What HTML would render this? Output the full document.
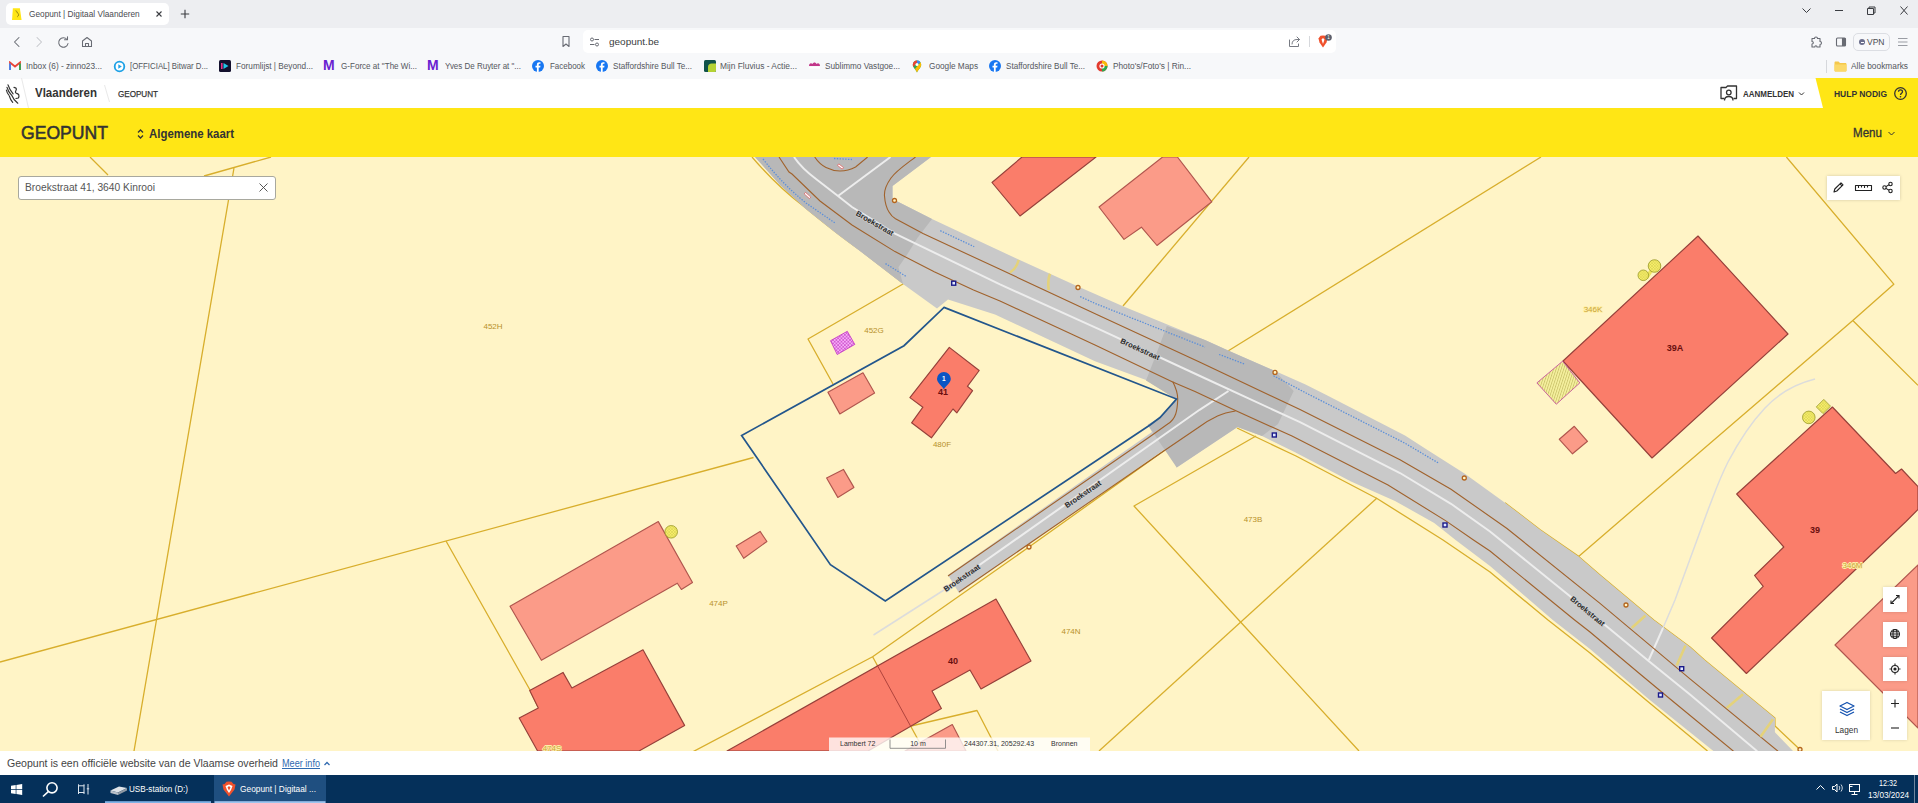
<!DOCTYPE html>
<html lang="nl">
<head>
<meta charset="utf-8">
<title>Geopunt | Digitaal Vlaanderen</title>
<style>
html,body{margin:0;padding:0;}
body{width:1918px;height:803px;overflow:hidden;position:relative;background:#fff;font-family:"Liberation Sans",sans-serif;color:#333;}
.abs{position:absolute;}
.t{position:absolute;white-space:nowrap;line-height:1;}
#tabstrip{left:0;top:0;width:1918px;height:28px;background:#edeef1;}
#tab{left:6px;top:3px;width:163px;height:22px;background:#fff;border-radius:5px;}
#toolbar{left:0;top:28px;width:1918px;height:26px;background:#f7f8fa;}
#urlbar{left:583px;top:30px;width:753px;height:23px;background:#fff;border-radius:5px;}
#bmbar{left:0;top:54px;width:1918px;height:25px;background:#f7f8fa;}
.bm{font-size:8.4px;color:#54575d;top:61.7px;}
#hdr{left:0;top:79px;width:1918px;height:30px;background:#fff;}
#yellow{left:0;top:108px;width:1918px;height:49.5px;background:#ffe615;}
#map{left:0;top:157px;width:1918px;height:594px;background:#fff4c6;overflow:hidden;}
#foot{left:0;top:751px;width:1918px;height:24px;background:#fff;}
#taskbar{left:0;top:775px;width:1918px;height:28px;background:#05305a;}
</style>
</head>
<body>
<!-- browser chrome -->
<div id="tabstrip" class="abs"></div>
<div id="tab" class="abs"></div>
<div id="toolbar" class="abs"></div>
<div id="urlbar" class="abs"></div>
<div id="bmbar" class="abs"></div>
<!-- tab -->
<svg class="abs" style="left:11.500px;top:7.500px" width="10.500" height="12.500" viewBox="0 0 12 14"><path d="M1 0H9L11 14H0Z" fill="#ffe615"/><path d="M4 3c1 0 2 1 2 2.500c1 0 1.500 1 1.500 2c0 1-.5 2-1.500 2.500" fill="none" stroke="#8a7a10" stroke-width="1"/></svg>
<div class="t fit" id="tabtitle" style="left:29px;top:9.700px;font-size:9px;color:#4a4c52;--w:110.7;transform:scaleX(0.9193);transform-origin:0 50%">Geopunt | Digitaal Vlaanderen</div>
<svg class="abs" style="left:155px;top:10px" width="8" height="8" viewBox="0 0 8 8"><path d="M1.500 1.500L6.500 6.500M6.500 1.500L1.500 6.500" stroke="#3a3c41" stroke-width="1.100" fill="none"/></svg>
<svg class="abs" style="left:180px;top:9px" width="10" height="10" viewBox="0 0 10 10"><path d="M5 .8V9.200M.8 5H9.200" stroke="#3a3c41" stroke-width="1.100" fill="none"/></svg>
<!-- window controls -->
<svg class="abs" style="left:1800px;top:5px" width="112" height="12" viewBox="0 0 112 12"><g fill="none" stroke="#3a3c41" stroke-width="1"><path d="M2.500 3.500L6.500 7.500L10.500 3.500"/><path d="M35 5.500H43"/><path d="M67.500 3.500h6v6h-6zM69 3.500V2h6v6h-1.500"/><path d="M100.500 1.500L107.500 9.500M107.500 1.500L100.500 9.500"/></g></svg>
<!-- toolbar icons -->
<svg class="abs" style="left:10px;top:34px" width="90" height="16" viewBox="0 0 90 16"><g fill="none" stroke-width="1.050" stroke-linecap="round" stroke-linejoin="round"><path d="M9 3.500L4.500 8L9 12.500" stroke="#686b73"/><path d="M27 3.500L31.500 8L27 12.500" stroke="#c4c6cb"/><path d="M57 5.500A4.700 4.700 0 1 0 58 9.500" stroke="#686b73"/><path d="M54.500 5.800H57.500V2.800" stroke="#686b73"/><path d="M72.500 12.500V7L77 3.500L81.500 7V12.500Z" stroke="#686b73"/><path d="M75.500 12.500V9.500H78.500V12.500" stroke="#686b73"/></g></svg>
<svg class="abs" style="left:561px;top:35px" width="10" height="13" viewBox="0 0 10 13"><path d="M2 1.500H8V11.500L5 9L2 11.500Z" fill="none" stroke="#686b73" stroke-width="1.100" stroke-linejoin="round"/></svg>
<svg class="abs" style="left:589px;top:37px" width="11" height="10" viewBox="0 0 11 10"><g fill="none" stroke="#686b73" stroke-width="1"><circle cx="3" cy="2.500" r="1.500"/><path d="M5.500 2.500H10"/><circle cx="8" cy="7.500" r="1.500"/><path d="M1 7.500H5.500"/></g></svg>
<div class="t fit" id="url" style="left:609px;top:36.500px;font-size:9.5px;color:#3a3c41;--w:50;transform:scaleX(1.0516);transform-origin:0 50%">geopunt.be</div>
<svg class="abs" style="left:1288px;top:35px" width="13" height="13" viewBox="0 0 13 13"><g fill="none" stroke="#777a82" stroke-width="1" stroke-linejoin="round" stroke-linecap="round"><path d="M1.500 5V11.500H10.500V9"/><path d="M4 9C4 6 6 4.500 9 4.500H11.500M9 2L11.500 4.500L9 7"/></g></svg>
<div class="abs" style="left:1309px;top:36px;width:1px;height:11px;background:#d6d8dc"></div>
<svg class="abs" style="left:1316px;top:33px" width="20" height="16" viewBox="0 0 20 16"><path d="M7 2.500L4.500 2.800L2.500 5.500L3.500 9.500L7 14.500L10.500 9.500L11.500 5.500L9.500 2.800Z" fill="#f0512c"/><path d="M7 5L5.500 6.500L7 11L8.500 6.500Z" fill="#fff"/><circle cx="12.500" cy="4.500" r="3.300" fill="#5c5f6b"/><text x="12.500" y="6.200" font-family="'Liberation Sans',sans-serif" font-size="4.500" fill="#fff" text-anchor="middle">1</text></svg>
<svg class="abs" style="left:1808px;top:35px" width="42" height="14" viewBox="0 0 42 14"><g fill="none" stroke="#686b73" stroke-width="1.100" stroke-linejoin="round"><path d="M4 3.500H6.500C6.500 1.500 9.500 1.500 9.500 3.500H12V6.500C14 6.500 14 9.500 12 9.500V12H9C9 10.300 6.800 10.300 6.800 12H4V9C5.800 9 5.800 6.500 4 6.500Z"/><rect x="28.500" y="3" width="9" height="8" rx="1"/><path d="M34.500 3V11" /></g><rect x="34.500" y="3" width="3" height="8" fill="#686b73"/></svg>
<div class="abs" style="left:1853px;top:32.500px;width:37px;height:18px;border:1px solid #dcdee3;border-radius:5px;background:#f7f8fa;box-sizing:border-box"></div>
<div class="abs" style="left:1859px;top:39px;width:6px;height:6px;border-radius:3px;background:#6a6d8c"></div><div class="abs" style="left:1860.500px;top:41.500px;width:3px;height:1px;background:#fff"></div>
<div class="t" style="left:1867px;top:37.500px;font-size:8.500px;color:#4a4c52">VPN</div>
<svg class="abs" style="left:1897px;top:37px" width="12" height="10" viewBox="0 0 12 10"><path d="M1 1.500H10.500M1 5H10.500M1 8.500H10.500" stroke="#9a9da4" stroke-width="1" fill="none"/></svg>
<!-- bookmarks -->
<svg class="abs" style="left:9px;top:60.6px" width="12" height="10" viewBox="0 0 12 10"><path d="M1 9V1.500L6 5.500L11 1.500V9" fill="none" stroke="#ea4335" stroke-width="1.800"/><path d="M1 9V2.500" stroke="#4285f4" stroke-width="1.800"/><path d="M11 9V2.500" stroke="#34a853" stroke-width="1.800"/></svg>
<div class="t bm fit" style="left:26px;--w:76;transform:scaleX(0.9894);transform-origin:0 50%">Inbox (6) - zinno23...</div>
<svg class="abs" style="left:113px;top:59.6px" width="13" height="13" viewBox="0 0 13 13"><circle cx="6.500" cy="6.500" r="4.800" fill="#fff" stroke="#1da1e6" stroke-width="1.800"/><path d="M5.300 4.300L8.800 6.500L5.300 8.700Z" fill="#1da1e6"/></svg>
<div class="t bm fit" style="left:130px;--w:78;transform:scaleX(0.9364);transform-origin:0 50%">[OFFICIAL] Bitwar D...</div>
<svg class="abs" style="left:219px;top:59.6px" width="12" height="12" viewBox="0 0 12 12"><rect width="12" height="12" rx="1.500" fill="#14112e"/><path d="M4.500 3L9.500 6L4.500 9Z" fill="#22c4e8"/><rect x="2" y="3" width="1.600" height="6" fill="#e8308a"/></svg>
<div class="t bm fit" style="left:236px;--w:77;transform:scaleX(0.9807);transform-origin:0 50%">Forumlijst | Beyond...</div>
<div class="t" style="left:323px;top:58.3px;font-size:14px;font-weight:bold;color:#6a1fd0;letter-spacing:-.5px">M</div>
<div class="t bm fit" style="left:341px;--w:76;transform:scaleX(0.9641);transform-origin:0 50%">G-Force at "The Wi...</div>
<div class="t" style="left:427px;top:58.3px;font-size:14px;font-weight:bold;color:#6a1fd0;letter-spacing:-.5px">M</div>
<div class="t bm fit" style="left:445px;--w:76;transform:scaleX(0.9526);transform-origin:0 50%">Yves De Ruyter at "...</div>
<svg class="abs fb" style="left:532px;top:59.6px" width="12" height="12" viewBox="0 0 12 12"><circle cx="6" cy="6" r="6" fill="#1877f2"/><path d="M6.700 12V7.500H8.200L8.500 5.700H6.700V4.700C6.700 4.100 7 3.800 7.600 3.800H8.500V2.300C8.100 2.200 7.600 2.200 7.200 2.200C5.800 2.200 4.900 3 4.900 4.500V5.700H3.500V7.500H4.900V12Z" fill="#fff"/></svg>
<div class="t bm fit" style="left:550px;--w:35;transform:scaleX(0.9516);transform-origin:0 50%">Facebook</div>
<svg class="abs fb" style="left:596px;top:59.6px" width="12" height="12" viewBox="0 0 12 12"><circle cx="6" cy="6" r="6" fill="#1877f2"/><path d="M6.700 12V7.500H8.200L8.500 5.700H6.700V4.700C6.700 4.100 7 3.800 7.600 3.800H8.500V2.300C8.100 2.200 7.600 2.200 7.200 2.200C5.800 2.200 4.900 3 4.900 4.500V5.700H3.500V7.500H4.900V12Z" fill="#fff"/></svg>
<div class="t bm fit" style="left:613px;--w:79;transform:scaleX(0.9678);transform-origin:0 50%">Staffordshire Bull Te...</div>
<svg class="abs" style="left:704px;top:59.6px" width="12" height="12" viewBox="0 0 12 12"><rect width="12" height="12" rx="1.500" fill="#10534a"/><path d="M4 12V7C4 5 5.500 3.500 7.500 3.500H12V10.500C12 11.300 11.300 12 10.500 12Z" fill="#b5d334"/></svg>
<div class="t bm fit" style="left:720px;--w:77;transform:scaleX(1.0026);transform-origin:0 50%">Mijn Fluvius - Actie...</div>
<svg class="abs" style="left:808px;top:60.6px" width="13" height="10" viewBox="0 0 13 10"><path d="M1 5C1 2.500 3 1.500 4.500 3C5.500 1 7.500 1 8.500 3C10 1.500 12 2.500 12 5Z" fill="#c2378a"/><path d="M1 6H12V7.500H1Z" fill="#fff"/></svg>
<div class="t bm fit" style="left:825px;--w:75;transform:scaleX(0.9784);transform-origin:0 50%">Sublimmo Vastgoe...</div>
<svg class="abs" style="left:912px;top:59.6px" width="10" height="13" viewBox="0 0 10 13"><path d="M5 .5C2.500 .5 .8 2.300 .8 4.700C.8 7.500 3.500 9 5 12.500C6.500 9 9.200 7.500 9.200 4.700C9.200 2.300 7.500 .5 5 .5Z" fill="#34a853"/><path d="M5 .5C2.500 .5 .8 2.300 .8 4.700C.8 5.500 1 6.200 1.400 6.900L5 2.500Z" fill="#ea4335"/><path d="M5 .5L5 4.700L8.500 2.200C7.700 1.100 6.500 .5 5 .5Z" fill="#4285f4"/><path d="M8.600 2.300L3 9C3.800 10 4.500 11.200 5 12.500C6.500 9 9.200 7.500 9.200 4.700C9.200 3.800 9 3 8.600 2.300Z" fill="#fbbc04"/><circle cx="5" cy="4.600" r="1.500" fill="#fff"/></svg>
<div class="t bm fit" style="left:929px;--w:49;transform:scaleX(0.9837);transform-origin:0 50%">Google Maps</div>
<svg class="abs fb" style="left:989px;top:59.6px" width="12" height="12" viewBox="0 0 12 12"><circle cx="6" cy="6" r="6" fill="#1877f2"/><path d="M6.700 12V7.500H8.200L8.500 5.700H6.700V4.700C6.700 4.100 7 3.800 7.600 3.800H8.500V2.300C8.100 2.200 7.600 2.200 7.200 2.200C5.800 2.200 4.900 3 4.900 4.500V5.700H3.500V7.500H4.900V12Z" fill="#fff"/></svg>
<div class="t bm fit" style="left:1006px;--w:79;transform:scaleX(0.9678);transform-origin:0 50%">Staffordshire Bull Te...</div>
<svg class="abs" style="left:1096px;top:59.6px" width="12" height="12" viewBox="0 0 12 12"><circle cx="6" cy="6" r="5.500" fill="#e33b2e"/><path d="M6 6L6 .5A5.500 5.500 0 0 1 11.500 6Z" fill="#f9bb0a"/><path d="M6 6L11.500 6A5.500 5.500 0 0 1 6 11.500Z" fill="#2da94f"/><circle cx="6" cy="6" r="2.600" fill="#fff"/><circle cx="6" cy="6" r="1.500" fill="#e33b2e"/></svg>
<div class="t bm fit" style="left:1113px;--w:78;transform:scaleX(0.9883);transform-origin:0 50%">Photo's/Foto's | Rin...</div>
<div class="abs" style="left:1826px;top:59.6px;width:1px;height:13px;background:#d6d8dc"></div>
<svg class="abs" style="left:1834px;top:60.6px" width="13" height="11" viewBox="0 0 13 11"><path d="M.5 1.500C.5 1 1 .5 1.500 .5H4.500L6 2H11.500C12 2 12.500 2.500 12.500 3V9.500C12.500 10 12 10.500 11.500 10.500H1.500C1 10.500 .5 10 .5 9.500Z" fill="#f5c84c"/><path d="M.5 3.500H12.500V9.500C12.500 10 12 10.500 11.500 10.500H1.500C1 10.500 .5 10 .5 9.500Z" fill="#fbd969"/></svg>
<div class="t bm fit" style="left:1851px;--w:57;transform:scaleX(0.9954);transform-origin:0 50%">Alle bookmarks</div>

<!-- page -->
<div id="hdr" class="abs"></div>
<div id="yellow" class="abs"></div>
<div id="map" class="abs">
<svg width="1918" height="594" viewBox="0 157 1918 594" style="position:absolute;left:0;top:0;display:block">
<defs>
<pattern id="hy" width="2.8" height="2.8" patternUnits="userSpaceOnUse"><rect width="2.8" height="2.8" fill="#f8f06a"/><path d="M0 0L2.800 2.800M2.800 0L0 2.800" stroke="#b4aa3a" stroke-width=".3"/></pattern>
<pattern id="hm" width="3.4" height="3.4" patternUnits="userSpaceOnUse"><rect width="3.4" height="3.4" fill="#f6b0f6"/><path d="M0 0L3.4 3.4M3.400 0L0 3.400" stroke="#c436c4" stroke-width=".6"/></pattern>
<pattern id="hl" width="2.4" height="2.4" patternUnits="userSpaceOnUse" patternTransform="rotate(18)"><rect width="2.4" height="2.4" fill="#f6f1a0"/><path d="M.5 0V2.400" stroke="#aaa244" stroke-width=".5"/></pattern>
</defs>
<rect x="0" y="157" width="1918" height="594" fill="#fff4c6"/>
<!-- parcel lines -->
<g id="parcels" fill="none" stroke="#d8ae2c" stroke-width="1.3" stroke-linejoin="round">
<path d="M90 157L108 175M271 157L204 176M234 168L134 751"/>
<path d="M0 662L753.500 457.500"/>
<path d="M446 541L530 690L538 707"/>
<path d="M903 284L808 339L833 384"/>
<path d="M752 157C770 178 785 192 802 205C825 224 840 236 860 250L904 284"/>
<path d="M1123 306L1249 157"/>
<path d="M1228 351L1541 157"/>
<path d="M1786.4 157L1893.8 284.2L1852.8 320.5L1578.600 556.400M1852.8 320.5L1918 385.3"/>
<path d="M693 751.700L872.6 656.8L1029 547L1165 450"/>
<path d="M872.6 656.8L921 745"/>
<path d="M911 726L977 710.5L998 751"/>
<path d="M1256 436L1134 506L1359 751"/>
<path d="M1377 498L1099 751"/>
<path d="M1237 428L1296 456L1377 498.500L1443 540L1490 572L1548 620L1590 653L1646 700L1707.500 751"/>
<path d="M1505 502.700L1540.500 530L1578.600 556.400L1600 574.900L1653.700 620L1690 646.900L1704.500 660L1774.900 718L1775 726L1800.400 750"/>
</g>
<!-- road -->
<g id="road">
<!-- base light -->
<path fill="#c9c9c9" d="M755 157L931 157L892.5 186L892.5 199L932 219.100L980 241.500L1017.500 259L1078 286.500L1123 306.200L1205 339.900L1229.800 351.200L1305 384.200L1326.400 395L1405 435.400L1427.500 450L1464.500 473.500L1505 502.700L1540.500 530L1578.600 556.400L1600 574.900L1653.700 620L1690 646.900L1704.500 660L1774.900 718L1774.900 732.200L1793 751L1713.400 751L1649.800 700L1590 648.900L1552.800 620L1490 565.900L1455.600 540L1434.200 522.900L1395 501L1351 481.500L1295 452.200L1262 436L1237.500 427L1176.700 467.600L1168 447L959 593L948 575L1152 432L1147.800 424.800L1160 417.500L1176 399L1146 380L1095 361.200L995 314.500L948 299.500L937 308.500L903 284L860 251L836 233L806 209L780 185Z"/>
<!-- dark top-left -->
<path fill="#b8b8b8" d="M755 157L931 157L892.5 186L892.5 199L932 219.100L917.400 238.100L906.200 256.100L898.400 267.300L903 284L860 251L836 233L806 209L780 185Z"/>
<!-- dark junction -->
<path fill="#b8b8b8" d="M1166.800 326L1205 339.900L1229.800 351.200L1275 371L1293.700 391L1278 424L1262 436L1237.500 427L1176.700 467.600L1147.800 424.800L1160 417.500L1176 399L1146 380.500L1154 360Z"/>
<!-- white centre lines -->
<g fill="none" stroke="#ededed" stroke-width="2">
<path d="M794 157C800 166 808 173 816 179L838 196L852 207L895 233.600L1000 284.400L1100 329.700L1200 376L1300 422.200L1400 473L1451 503.800L1490 531.500L1568.500 595L1605 625L1648 660.500L1690 694.500L1757.200 751.200"/>
<path d="M838 196L890.5 157"/>
<path d="M1228.5 391L1199.6 409.8L944 590"/>
<path d="M1648.800 660L1663 628"/>
</g>
<!-- light gray paths -->
<g fill="none" stroke="#dcdcdc" stroke-width="1.5">
<path d="M944 590L873.5 635"/>
<path d="M1815 379C1795 384 1778 394 1765 408C1748 426 1738 443 1728 462C1718 482 1714 495 1708 510L1675 600L1663 628"/>
</g>
<!-- brown curbs -->
<g fill="none" stroke="#a0622c" stroke-width="1.1">
<path d="M779 157L789 172L792 174L820 201L852 225L895 251.600L934.200 271.800L973.500 290L1000 301L1073.500 335L1095 344.900L1172.700 381.900L1195 391.500L1235.400 410.600L1292 436L1388 485L1445.500 520.600L1473.500 540L1490 551L1574 619.500L1590 632L1640 674L1670.700 699.500L1733.500 751.200"/>
<path d="M915.5 157C905 165 896 171 891 178C886 185 884 190 884.5 196C885 203 886.500 208 889 212C891 215.500 893 217.300 895.500 218.800L923 233.600L1000 269.300L1100 316L1200 362.300L1300 409.500L1400 459.700L1451 489.200L1507 528.500L1600 603.400L1690 678.800L1778 751.200"/>
<path d="M814.7 157C818 162 821 165 826 167.5C831 170 835 171 840 171C846 171 851 169.5 855.6 167L867.6 157"/>
<path d="M1172.7 381.5C1176 388 1178 394 1177.7 400C1177.5 406 1177 410 1175.7 414C1174 419 1171 422 1167.7 424L1149.8 436.7L948 576"/>
<path d="M1235.5 411C1229 412 1223 413.5 1217.5 416C1210 419.5 1204 423 1197.6 428L1159.7 453.7L959 592"/>
</g>
<!-- blue dotted -->
<g fill="none" stroke="#5b8fd9" stroke-width="1.3" stroke-dasharray="1.4 1.4">
<path d="M763 159C778 178 790 190 806 203L835 223"/>
<path d="M885.5 263.6L906.4 276.6"/>
<path d="M940.3 230.7L974.2 246.7"/>
<path d="M834 158.5L852 159.5"/>
<path d="M1080.200 296.600L1095 303.400L1205 347.100"/>
<path d="M1219.100 354.500L1244.900 364.100"/>
<path d="M1273.500 375.800L1306 393L1405 443.200L1438.200 462.900"/>
</g>
<!-- yellow driveway marks -->
<g fill="none" stroke="#e4d27a" stroke-width="2.6">
<path d="M1018.7 260C1017 266 1014 270 1010 272.5"/>
<path d="M1050 273.7C1048 279 1048 285 1048.7 290"/>
<path d="M1645.5 615.5L1631.7 628"/><path d="M1685.5 645.5L1676.7 665.5"/><path d="M1743 694.2L1726.7 708"/><path d="M1773 719.2L1760.5 736.7"/>
</g>
<!-- small red markers -->
<g fill="#fff" stroke="#e05a5a" stroke-width=".7">
<rect x="-3" y="-1" width="6" height="2" transform="translate(840.5 166.5) rotate(38)"/>
<rect x="-3.5" y="-1" width="7" height="2" transform="translate(807.5 195.5) rotate(42)"/>
</g>
<!-- orange circles -->
<g fill="#fff4c6" stroke="#b5651d" stroke-width="1.3">
<circle cx="894.5" cy="200.5" r="2"/><circle cx="1078" cy="287.5" r="2"/><circle cx="1275" cy="372.4" r="2"/><circle cx="1464.3" cy="478" r="2"/><circle cx="1626" cy="605" r="2"/><circle cx="1029" cy="547" r="2"/><circle cx="1800" cy="749.5" r="2"/>
</g>
<!-- blue squares -->
<g fill="#dfe8ff" stroke="#1a1a8a" stroke-width="1.4">
<rect x="951.7" y="281.2" width="4" height="4"/><rect x="1272.3" y="433.0" width="4" height="4"/><rect x="1443.0" y="523.0" width="4" height="4"/><rect x="1679.7" y="666.7" width="4" height="4"/><rect x="1658.5" y="693.0" width="4" height="4"/>
</g>
</g>

<!-- buildings -->
<g id="bld" stroke-width="1.150" stroke-linejoin="round">
<g fill="#fa7d6a" stroke="#96403a">
<path d="M992 182.5L1022 157L1096 157L1020 216Z"/>
<path d="M949.3 347.4L979.2 370.5L967.4 386.3L972.6 390.6L956.8 412.8L953 409L931.4 437.8L911.6 422.8L922.9 407.2L909.9 397.6Z"/>
<path d="M1698 236L1788 334L1652 458L1563 361Z"/>
<path d="M1832.4 407L1895.6 473.5L1901.5 469L1918 486.5L1918 509.500L1906 521.500L1746.4 673.5L1711.6 638L1763.2 586.4L1754.6 575.5L1783.8 547L1736.7 494Z"/>
<path d="M727 751L996 599L1031 661L981 689L970 670L932 691L941.4 708.6L868 751Z"/>
<path d="M519.2 718L538.3 708L529.7 690.5L563 672.4L571.9 688L643 649.8L684.6 725.4L639 751L537.6 751Z"/>
</g>
<g fill="#fb9b88" stroke="#b0564e">
<path d="M1099 207L1162.600 157L1177.400 157L1211.800 201.800L1157 245.500L1141.400 227.200L1124 239.400Z"/>
<path d="M827.9 392.2L863 372.8L874.6 393L839.8 413.9Z"/>
<path d="M826.6 478L843.4 469.4L853.9 487.4L837.8 497.4Z"/>
<path d="M736.2 546L760.1 531.4L766.9 541.5L743.7 558.3Z"/>
<path d="M510 606.3L658.3 521.6L692.5 582.5L681.4 589.5L677.3 583.2L541.4 660.3Z"/>
<path d="M1559.3 439.3L1574.3 426.3L1587.5 441.3L1572.5 453.8Z"/>
<path d="M1835 645L1918 565L1918 728Z"/>
<path d="M928 738L952.3 724.6L959.3 738L966 751L905 751Z"/>
</g>
<path d="M877 664.8L910.7 726.3" fill="none" stroke="#b0433c" stroke-width="1"/>
<!-- hatched -->
<path d="M830.5 340.7L847.3 331.3L854.8 344.4L837.2 354.5Z" fill="url(#hm)" stroke="#c02ec0" stroke-width=".8"/>
<path d="M1536.9 382.9L1562.6 361.2L1579.8 382.9L1556.3 404.2Z" fill="url(#hl)" stroke="#c0409a" stroke-width=".8"/>
<g fill="url(#hy)" stroke="#9a9a2a" stroke-width=".8">
<path d="M1646.5 278L1651.5 270" stroke="#ece35e" stroke-width="3.500"/>
<circle cx="1643.3" cy="275.3" r="5.3"/><circle cx="1654.5" cy="266" r="6.3"/>
<circle cx="1808.8" cy="417.4" r="6.3"/>
<path d="M1816.3 406.9L1823.8 399.4L1830.5 406.2L1823 413.6Z"/>
<circle cx="671.2" cy="531.8" r="6.3"/>
</g>
</g>
<!-- selected parcel -->
<path d="M944 307.4L1176.5 399L1160 417.5L1150 425L885.3 601L830.4 564.7L741.6 435.5L904 345.7Z" fill="none" stroke="#23568c" stroke-width="1.7" stroke-linejoin="miter"/>

<!-- labels -->
<g font-family="'Liberation Sans',sans-serif" text-anchor="middle">
<g font-size="8" fill="#b8912a">
<text x="493" y="329">452H</text>
<text x="874" y="333">452G</text>
<text x="942" y="447">480F</text>
<text x="718.5" y="606">474P</text>
<text x="1071" y="634">474N</text>
<text x="1253" y="522">473B</text>
</g>
<g font-size="8" fill="#c9a23a" stroke="#fff0a8" stroke-width="1.8" paint-order="stroke" stroke-linejoin="round">
<text x="1593" y="312">346K</text>
<text x="1852.500" y="568">346M</text>
<text x="552" y="751">474S</text>
</g>
<g font-size="9" font-weight="bold" fill="#6b0f0f">
<text x="1675" y="350.7">39A</text>
<text x="1815" y="532.5">39</text>
<text x="953" y="663.5">40</text>
<text x="943" y="394.5">41</text>
</g>
<g font-size="7.6" font-weight="bold" fill="#2b2b2b" stroke="#d0d0d0" stroke-width="1.4" paint-order="stroke" stroke-linejoin="round">
<text transform="translate(873.5 225.5) rotate(30)">Broekstraat</text>
<text transform="translate(1139 351.500) rotate(24.5)">Broekstraat</text>
<text transform="translate(1586 613.200) rotate(39.5)">Broekstraat</text>
<text transform="translate(963.5 580) rotate(-34.6)">Broekstraat</text>
<text transform="translate(1084.5 496.3) rotate(-34.6)">Broekstraat</text>
</g>
</g>
<!-- pin -->
<g transform="translate(943.9 379.6)">
<path d="M0 9.700C-2.500 5.500-6.900 3.500-6.900-.8A6.900 6.900 0 1 1 6.900-.8C6.900 3.500 2.500 5.500 0 9.700Z" fill="#0a55c4"/>
<text x="0" y="1.600" font-family="'Liberation Sans',sans-serif" font-size="6.5" font-weight="bold" fill="#fff" text-anchor="middle">1</text>
</g>
<!-- scale bar -->
<g>
<rect x="829" y="737.5" width="261" height="13.5" fill="#ffffff" fill-opacity=".78"/>
<g font-family="'Liberation Sans',sans-serif" font-size="7" fill="#333">
<text x="840" y="745.9">Lambert 72</text>
<text x="918" y="745.9" text-anchor="middle">10 m</text>
<text x="964" y="745.9">244307.31, 205292.43</text>
<text x="1051" y="745.9">Bronnen</text>
</g>
<path d="M890 739.5V748.3H945.5V739.5" fill="none" stroke="#777" stroke-width=".8"/>
</g>

</svg>

</div>
<div id="foot" class="abs"></div>
<div id="taskbar" class="abs"></div>
<!-- Vlaanderen header -->
<svg class="abs" style="left:0;top:78px" width="120" height="30" viewBox="0 0 120 30">
<path d="M21.500 0L28.500 30" stroke="#e9e9e9" stroke-width="1" fill="none"/>
<path d="M104.500 7L109.500 24" stroke="#e9e9e9" stroke-width="1" fill="none"/>
<g fill="none" stroke="#333" stroke-width="1.200" stroke-linecap="round">
<path d="M6.400 12C6.800 14 7.800 16 8.900 17.200M7 9.300C7.800 12 9.500 15 11.300 16.800M8 6.900C9 10 11 13.500 13.100 15.800M9.400 18.200C10 20.500 11.200 22.800 12.700 24.300M11.700 17.200C13 20.500 15.500 23.500 17.800 25.200"/>
<path d="M14 9.300C15.500 9.500 16.400 10.200 16.400 11.100C16.400 12.500 15 13.200 15.500 14.400C16 15.800 18.500 15.500 18.800 16.800C19.200 18.500 18.800 19.500 18.300 20L16 20.500"/>
</g></svg>
<div class="t fit" style="left:35px;top:85.500px;font-size:13px;font-weight:bold;color:#333;--w:62;transform:scaleX(0.8845);transform-origin:0 50%">Vlaanderen</div>
<div class="t fit" style="left:118px;top:89.500px;font-size:9px;color:#333;-webkit-text-stroke:.25px #333;--w:40;transform:scaleX(0.8986);transform-origin:0 50%">GEOPUNT</div>
<svg class="abs" style="left:1719px;top:84px" width="20" height="18" viewBox="0 0 20 18"><g fill="none" stroke="#333" stroke-width="1.300" stroke-linejoin="round"><path d="M5 14.500H2V3.500H7L8.500 2H17.500V14.500H14.500"/><circle cx="9.800" cy="8.500" r="2.300"/><path d="M5.500 16.500C5.500 13.500 7.500 12.500 9.800 12.500C12 12.500 14 13.500 14 16.500"/></g></svg>
<div class="t fit" style="left:1743px;top:89.500px;font-size:9px;color:#333;font-weight:bold;--w:51;transform:scaleX(0.8870);transform-origin:0 50%">AANMELDEN</div>
<svg class="abs" style="left:1798px;top:91px" width="7" height="6" viewBox="0 0 7 6"><path d="M1 1.500L3.500 4L6 1.500" fill="none" stroke="#333" stroke-width="1"/></svg>
<svg class="abs" style="left:1810px;top:78px" width="108" height="30" viewBox="0 0 108 30"><path d="M5.500 0H108V30H13Z" fill="#ffe615"/><circle cx="90.500" cy="15.500" r="5.800" fill="none" stroke="#333" stroke-width="1.300"/><path d="M88.500 13.800C88.500 11.200 92.500 11.200 92.500 13.700C92.500 15.200 90.500 15.200 90.500 17" fill="none" stroke="#333" stroke-width="1.300"/><circle cx="90.500" cy="18.800" r=".8" fill="#333"/></svg>
<div class="t fit" style="left:1834px;top:89.500px;font-size:9px;color:#333;font-weight:bold;--w:53;transform:scaleX(0.9407);transform-origin:0 50%">HULP NODIG</div>
<!-- yellow band -->
<div class="t fit" style="left:20.500px;top:123.500px;font-size:18px;color:#333;-webkit-text-stroke:.55px #333;--w:87;transform:scaleX(0.9774);transform-origin:0 50%">GEOPUNT</div>
<svg class="abs" style="left:136px;top:128px" width="9" height="12" viewBox="0 0 9 12"><path d="M2 4.500L4.500 2L7 4.500M2 7.500L4.500 10L7 7.500" fill="none" stroke="#333" stroke-width="1.300"/></svg>
<div class="t fit" style="left:149px;top:128px;font-size:12px;font-weight:bold;color:#333;--w:85;transform:scaleX(0.9510);transform-origin:0 50%">Algemene kaart</div>
<div class="t fit" style="left:1853px;top:126.500px;font-size:12px;color:#333;-webkit-text-stroke:.3px #333;--w:29;transform:scaleX(0.9657);transform-origin:0 50%">Menu</div>
<svg class="abs" style="left:1887px;top:130px" width="9" height="7" viewBox="0 0 9 7"><path d="M1.500 2L4.500 5L7.500 2" fill="none" stroke="#333" stroke-width="1"/></svg>
<!-- search box -->
<div class="abs" style="left:17.500px;top:175.500px;width:258px;height:24px;box-sizing:border-box;background:#fff;border:1px solid #a8a89e;border-radius:3px"></div>
<div class="t fit" style="left:25px;top:182px;font-size:10.500px;color:#555;--w:130;transform:scaleX(0.9768);transform-origin:0 50%">Broekstraat 41, 3640 Kinrooi</div>
<svg class="abs" style="left:258px;top:182px" width="11" height="11" viewBox="0 0 11 11"><path d="M1.500 1.500L9.500 9.500M9.500 1.500L1.500 9.500" stroke="#444" stroke-width=".9" fill="none"/></svg>
<!-- draw toolbar -->
<div class="abs" style="left:1827px;top:175.500px;width:73px;height:24px;background:#fff;box-shadow:0 0 3px rgba(0,0,0,.18)"></div>
<svg class="abs" style="left:1830px;top:179px" width="68" height="17" viewBox="0 0 68 17"><g fill="none" stroke="#222" stroke-width="1.100" stroke-linejoin="round"><path d="M4 13L4.800 10L11 3.800L13 5.800L6.800 12L4 13Z"/><path d="M10 4.800L12 6.800"/><rect x="25.500" y="6.500" width="16" height="5"/><path d="M28.500 6.500V9M31.500 6.500V8.500M34.500 6.500V9M37.500 6.500V8.500"/><circle cx="54.500" cy="8.500" r="1.700"/><circle cx="60.500" cy="5" r="1.700"/><circle cx="60.500" cy="12" r="1.700"/><path d="M56 7.600L59 5.800M56 9.400L59 11.200"/></g></svg>
<!-- right buttons -->
<div class="abs btn" style="left:1882.500px;top:587px;width:24px;height:24.500px;background:#fff;box-shadow:0 0 3px rgba(0,0,0,.15)"></div>
<div class="abs btn" style="left:1882.500px;top:622px;width:24px;height:24.500px;background:#fff;box-shadow:0 0 3px rgba(0,0,0,.15)"></div>
<div class="abs btn" style="left:1882.500px;top:656.500px;width:24px;height:24.500px;background:#fff;box-shadow:0 0 3px rgba(0,0,0,.15)"></div>
<div class="abs btn" style="left:1882.500px;top:691px;width:24px;height:49px;background:#fff;box-shadow:0 0 3px rgba(0,0,0,.15)"></div>
<div class="abs btn" style="left:1821.500px;top:691px;width:48.500px;height:49px;background:#fff;box-shadow:0 0 3px rgba(0,0,0,.15)"></div>
<svg class="abs" style="left:1882.500px;top:587px" width="24" height="154" viewBox="0 0 24 154"><g fill="none" stroke="#222" stroke-width="1.100">
<path d="M8 16.500L16 8.500"/><path d="M13 8.500H16V11.500M8 13.500V16.500H11" />
<circle cx="12" cy="47" r="4.500"/><ellipse cx="12" cy="47" rx="2" ry="4.500"/><path d="M7.500 47H16.500M8 44.800H16M8 49.200H16"/>
<circle cx="12" cy="82" r="3.500"/><path d="M12 76.500V78.500M12 85.500V87.500M6.500 82H8.500M15.500 82H17.500"/>
<path d="M8 116.500H16M12 112.500V120.500"/><path d="M8 141H16"/></g><circle cx="12" cy="82" r="1.600" fill="#222"/></svg>
<svg class="abs" style="left:1838px;top:700px" width="18" height="20" viewBox="0 0 18 20"><g fill="none" stroke="#1452b0" stroke-width="1.300" stroke-linejoin="round"><path d="M9 2.500L16 6L9 9.500L2 6Z"/><path d="M2 9L9 12.500L16 9"/><path d="M2 12L9 15.500L16 12"/></g></svg>
<div class="t fit" style="left:1835px;top:726px;font-size:8.500px;color:#333;--w:23;transform:scaleX(0.9729);transform-origin:0 50%">Lagen</div>
<!-- footer -->
<div class="t fit" style="left:7px;top:758px;font-size:10.500px;color:#444;--w:271;transform:scaleX(1.0056);transform-origin:0 50%">Geopunt is een officiële website van de Vlaamse overheid</div>
<div class="t fit" style="left:282px;top:758.500px;font-size:10px;color:#2f6ab0;text-decoration:underline;--w:38;transform:scaleX(0.9115);transform-origin:0 50%">Meer info</div>
<svg class="abs" style="left:323px;top:760px" width="8" height="7" viewBox="0 0 8 7"><path d="M1.500 5L4 2.500L6.500 5" fill="none" stroke="#2f6ab0" stroke-width="1.300"/></svg>
<!-- taskbar -->
<svg class="abs" style="left:0;top:775px" width="330" height="28" viewBox="0 0 330 28">
<rect x="214" y="0" width="112" height="28" fill="#1f4f80"/>
<rect x="105" y="26.200" width="106" height="1.800" fill="#7fb2e6"/><rect x="214.500" y="26.200" width="111" height="1.800" fill="#9cc4ee"/>
<g fill="#fff"><path d="M11 10.800L15.700 10.100V14.200H11ZM16.400 10L22.200 9.100V14.200H16.400ZM11 14.900H15.700V19L11 18.300ZM16.400 14.900H22.200V20L16.400 19.100Z"/></g>
<g fill="none" stroke="#fff" stroke-width="1.600"><circle cx="52" cy="12.800" r="5.100"/><path d="M48.300 16.700L43 21.500"/></g>
<g fill="none" stroke="#dfe6ee" stroke-width="1"><rect x="78.500" y="10.800" width="5.500" height="6.700"/><path d="M78.500 9.300V10.800M84 9.300V10.800M78.500 17.500V19M84 17.500V19M88 9V19.500M86.800 13.800H89.200"/></g>
<path d="M110.500 15.500L119 11.500L127 13L118 17.500Z" fill="#dfe3e8"/><path d="M110.500 15.500L118 17.500V20L110.500 18Z" fill="#b9c0c9"/><path d="M118 17.500L127 13V15.500L118 20Z" fill="#8f98a3"/>
<path d="M229 6.500L226.500 6.800L224.500 9L222.500 9.500L223.500 14.500L229 21.500L234.500 14.500L235.500 9.500L233.500 9L231.500 6.800Z" fill="#f0512c"/><path d="M229 9.500L225.500 11L227 15L229 18L231 15L232.500 11Z" fill="#fff"/><path d="M229 11L227.500 12.500L229 15.500L230.500 12.500Z" fill="#f0512c"/>
</svg>
<div class="t fit" style="left:129px;top:784.500px;font-size:8.500px;color:#fff;--w:59;transform:scaleX(0.9535);transform-origin:0 50%">USB-station (D:)</div>
<div class="t fit" style="left:240px;top:784.500px;font-size:8.500px;color:#fff;--w:76;transform:scaleX(0.9826);transform-origin:0 50%">Geopunt | Digitaal ...</div>
<svg class="abs" style="left:1812px;top:775px" width="106" height="28" viewBox="0 0 106 28"><g fill="none" stroke="#fff" stroke-width="1"><path d="M4.500 14.500L8.500 10.500L12.500 14.500"/><path d="M20.500 11.500H22.500L25 9V17L22.500 14.500H20.500Z"/><path d="M27 11C28 12.300 28 13.700 27 15M29 9.500C30.700 11.800 30.700 14.200 29 16.500" stroke-width=".8"/><rect x="37.500" y="9.500" width="10" height="7"/><path d="M42.500 16.500V19M39.500 19.500H45.500M37.500 11.500H40.500"/></g><rect x="102" y="0" width=".8" height="28" fill="#8a9bb0"/></svg>
<div class="t fit" style="left:1879px;top:778.500px;font-size:8.500px;color:#fff;--w:18;transform:scaleX(0.8458);transform-origin:0 50%">12:32</div>
<div class="t fit" style="left:1868px;top:791px;font-size:8.500px;color:#fff;--w:41;transform:scaleX(0.9636);transform-origin:0 50%">13/03/2024</div>

</body>
</html>
